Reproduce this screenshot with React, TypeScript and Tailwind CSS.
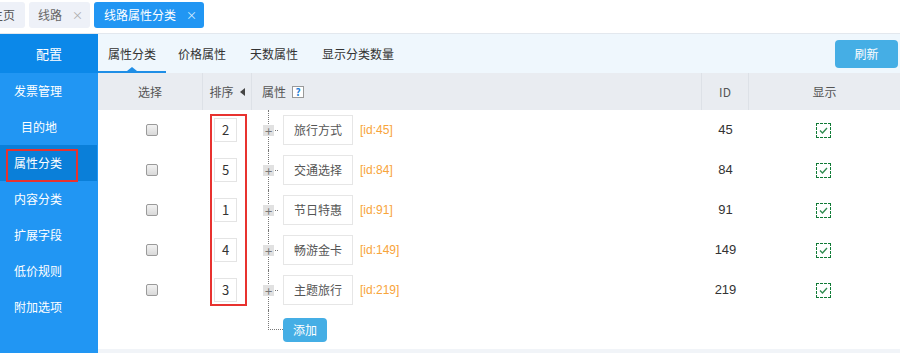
import { useState } from "react";

const menu = [
  { name: "发票管理", indent: false },
  { name: "目的地", indent: true },
  { name: "属性分类", indent: false, active: true },
  { name: "内容分类", indent: false },
  { name: "扩展字段", indent: false },
  { name: "低价规则", indent: false },
  { name: "附加选项", indent: false },
];

const rows = [
  { sort: 2, name: "旅行方式", id: 45 },
  { sort: 5, name: "交通选择", id: 84 },
  { sort: 1, name: "节日特惠", id: 91 },
  { sort: 4, name: "畅游金卡", id: 149 },
  { sort: 3, name: "主题旅行", id: 219 },
];

const subTabs = ["属性分类", "价格属性", "天数属性", "显示分类数量"];

const ShowCheck = () => (
  <span className="flex h-[15px] w-[15px] items-center justify-center border border-dashed border-[#0f7a35]">
    <svg width="9" height="7" viewBox="0 0 9 7">
      <path d="M1 3.5 L3.5 6 L8 1" fill="none" stroke="#2d8a4e" strokeWidth="1.3" />
    </svg>
  </span>
);

const App = () => {
  const [active, setActive] = useState(0);

  return (
    <div className="h-[353px] w-[900px] overflow-hidden bg-white font-['Microsoft_YaHei','Noto_Sans_CJK_SC',sans-serif] text-[12px] text-[#333]">
      {/* 顶部标签 */}
      <div className="flex h-[34px] items-start gap-1 whitespace-nowrap border-b border-[#e3e8ee] pt-[2px]">
        <div className="-ml-[9px] flex h-[26px] items-center rounded-[3px] bg-[#eef1f8] pr-[10px] text-[#555]">主页</div>
        <div className="flex h-[26px] items-center gap-[10px] rounded-[3px] bg-[#eef1f8] pl-[9px] pr-[7px] text-[#666]">
          线路<span className="text-[11px] text-[#aaa]">×</span>
        </div>
        <div className="flex h-[26px] items-center gap-[10px] rounded-[3px] bg-[#2196f3] pl-[10px] pr-[7px] text-white">
          线路属性分类<span className="text-[11px] text-[#dcefff]">×</span>
        </div>
      </div>

      <div className="flex h-[319px]">
        {/* 侧边栏 */}
        <aside className="w-[98px] shrink-0 bg-[#2196f3] text-white">
          <div className="flex h-[39px] items-center justify-center bg-[#0b88e9] text-[13px]">配置</div>
          {menu.map((m) => (
            <div
              key={m.name}
              className={`relative flex h-[36px] items-center ${m.indent ? "pl-[21px]" : "pl-[14px]"} ${m.active ? "mr-px bg-[#0a7fd9]" : ""}`}
            >
              {m.name}
              {m.active && <span className="absolute left-[6px] top-[4px] h-[33px] w-[72px] border-2 border-[#e8322f]" />}
            </div>
          ))}
        </aside>

        {/* 主区域 */}
        <main className="flex flex-1 flex-col">
          <div className="flex h-[39px] items-center whitespace-nowrap bg-[#eff7fd] pr-[2px]">
            {subTabs.map((t, i) => (
              <button
                key={t}
                onClick={() => setActive(i)}
                className={`relative flex h-full items-center ${i === 0 ? "px-[10px]" : "px-[12px]"} text-[#333]`}
              >
                {t}
                {i === active && (
                  <>
                    <span className="absolute bottom-0 left-0 h-[2px] w-full bg-[#1f8ee6]" />
                    <span className="absolute bottom-[2px] left-1/2 h-0 w-0 -translate-x-1/2 border-x-[5px] border-b-[4px] border-x-transparent border-b-[#1f8ee6]" />
                  </>
                )}
              </button>
            ))}
            <button className="ml-auto h-[28px] w-[63px] rounded-[4px] bg-[#45aee5] text-white">刷新</button>
          </div>

          {/* 表头 */}
          <div className="flex h-[37px] items-center bg-[#e9ecf1] text-[#555]">
            <div className="flex h-full w-[105px] items-center justify-center border-r border-[#dde1e7]">选择</div>
            <div className="flex h-full w-[49px] items-center justify-center gap-[6px] border-r border-[#dde1e7]">
              排序
              <span className="h-0 w-0 border-y-[4px] border-r-[5px] border-y-transparent border-r-[#444]" />
            </div>
            <div className="flex h-full w-[450px] items-center gap-[6px] border-r border-[#dde1e7] pl-[10px]">
              属性
              <span className="flex h-[12px] w-[12px] items-center justify-center border border-[#999] bg-white text-[10px] font-bold leading-none text-[#1c7ed6]">?</span>
            </div>
            <div className="flex h-full w-[47px] items-center justify-center border-r border-[#dde1e7]">ID</div>
            <div className="flex h-full flex-1 items-center justify-center">显示</div>
          </div>

          {/* 表格内容 */}
          <div className="relative flex flex-1 flex-col">
            <span className="absolute left-[112px] top-[4px] h-[192px] w-[37px] border-2 border-[#e8322f]" />
            {rows.map((r) => (
              <div key={r.id} className="flex h-[40px] items-center">
                <div className="flex w-[105px] justify-center pl-[2px]">
                  <span className="h-[12px] w-[12px] rounded-[2px] border border-[#9a9a9a] bg-gradient-to-b from-[#f2f2f2] to-[#d9d9d9]" />
                </div>
                <div className="flex w-[49px] justify-center pr-[4px]">
                  <span className="flex h-[24px] w-[23px] items-center justify-center border border-[#e4e4e4] text-[13px] text-[#333]">{r.sort}</span>
                </div>
                <div className="flex h-full w-[450px] items-center pl-[16px]">
                  <div className="flex h-full w-[15px] items-center border-l border-dotted border-[#777]">
                    <span className="-ml-[6px] flex h-[11px] w-[11px] items-center justify-center bg-[#e1e1e1] text-[13px] leading-none text-[#777]">+</span>
                    <span className="ml-[1px] w-[3px] border-t border-dotted border-[#777]" />
                  </div>
                  <span className="flex h-[30px] w-[70px] items-center justify-center border border-[#e6e6e6] text-[#555]">{r.name}</span>
                  <span className="ml-[7px] font-['Liberation_Sans',sans-serif] text-[#f8a43a]">[id:{r.id}]</span>
                </div>
                <div className="flex w-[47px] justify-center font-['Liberation_Sans',sans-serif] text-[13px] text-[#333]">{r.id}</div>
                <div className="flex flex-1 justify-center pr-[2px]">
                  <ShowCheck />
                </div>
              </div>
            ))}
            <div className="flex h-[39px] items-center pl-[170px]">
              <div className="mb-[19px] h-[20px] w-[15px] self-start border-b border-l border-dotted border-[#777]" />
              <button className="h-[24px] w-[44px] rounded-[4px] bg-[#45aee5] text-white">添加</button>
            </div>
            <div className="h-[4px] bg-[#f1f4f8]" />
          </div>
        </main>
      </div>
    </div>
  );
};

export default App;
